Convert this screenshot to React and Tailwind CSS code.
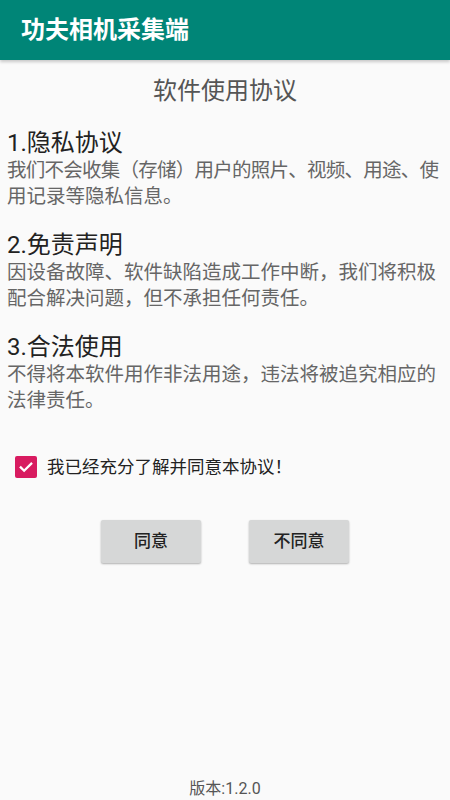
import React, { useState } from "react";

const sections = [
  {
    title: "1.隐私协议",
    lines: ["我们不会收集（存储）用户的照片、视频、用途、使", "用记录等隐私信息。"],
  },
  {
    title: "2.免责声明",
    lines: ["因设备故障、软件缺陷造成工作中断，我们将积极", "配合解决问题，但不承担任何责任。"],
  },
  {
    title: "3.合法使用",
    lines: ["不得将本软件用作非法用途，违法将被追究相应的", "法律责任。"],
  },
];

export default function App() {
  const [agreed, setAgreed] = useState(true);

  return (
    <div
      className="flex h-screen w-full flex-col bg-[#fafafa]"
      style={{ fontFamily: 'Roboto, "Noto Sans CJK SC", sans-serif' }}
    >
      {/* Toolbar */}
      <div className="relative z-10 flex h-[60px] shrink-0 items-center bg-[#008577] px-[21px] shadow-[0_2px_3px_rgba(0,0,0,0.2)]">
        <h1 className="text-[24px] font-bold leading-none text-white">功夫相机采集端</h1>
      </div>

      <div className="mt-[15px] text-center text-[24px] leading-[32px] text-[#555555]">软件使用协议</div>

      <div className="mt-[21px] flex flex-col gap-[21px] px-[7px]">
        {sections.map((s) => (
          <div key={s.title}>
            <div className="text-[24px] leading-[30px] text-[#222222]">{s.title}</div>
            <div className="text-[19.5px] leading-[25.5px] text-[#666666]">
              {s.lines.map((line, i) => (
                <div key={i} className={`whitespace-nowrap ${i === 0 && s.title === "1.隐私协议" ? "tracking-[-0.75px]" : ""}`}>
                  {line}
                </div>
              ))}
            </div>
          </div>
        ))}
      </div>

      {/* Agreement checkbox */}
      <label className="mt-[42px] flex h-[24px] items-center pl-[15px]">
        <button
          type="button"
          onClick={() => setAgreed(!agreed)}
          className={`flex h-[22px] w-[22px] items-center justify-center rounded-[2px] ${
            agreed ? "bg-[#d81b60]" : "border-2 border-[#757575]"
          }`}
        >
          {agreed && (
            <svg viewBox="0 0 24 24" className="h-[18px] w-[18px]" fill="none" stroke="white" strokeWidth="3" strokeLinecap="square">
              <path d="M5 12.5l4.5 4.5L19 7.5" />
            </svg>
          )}
        </button>
        <span className="ml-[10px] text-[17.5px] leading-[24px] text-[#222222]">我已经充分了解并同意本协议！</span>
      </label>

      {/* Buttons */}
      <div className="mt-[41px] flex justify-center gap-[48px]">
        <button className="h-[43px] w-[100px] rounded-[2px] bg-[#d6d7d7] text-[17px] font-medium text-[#222222] shadow-[0_1px_2px_rgba(0,0,0,0.3)]">
          同意
        </button>
        <button className="h-[43px] w-[100px] rounded-[2px] bg-[#d6d7d7] text-[17px] font-medium text-[#222222] shadow-[0_1px_2px_rgba(0,0,0,0.3)]">
          不同意
        </button>
      </div>

      <div className="mt-auto pb-[1px] text-center text-[16px] leading-[20px] text-[#555555]">版本:1.2.0</div>
    </div>
  );
}
